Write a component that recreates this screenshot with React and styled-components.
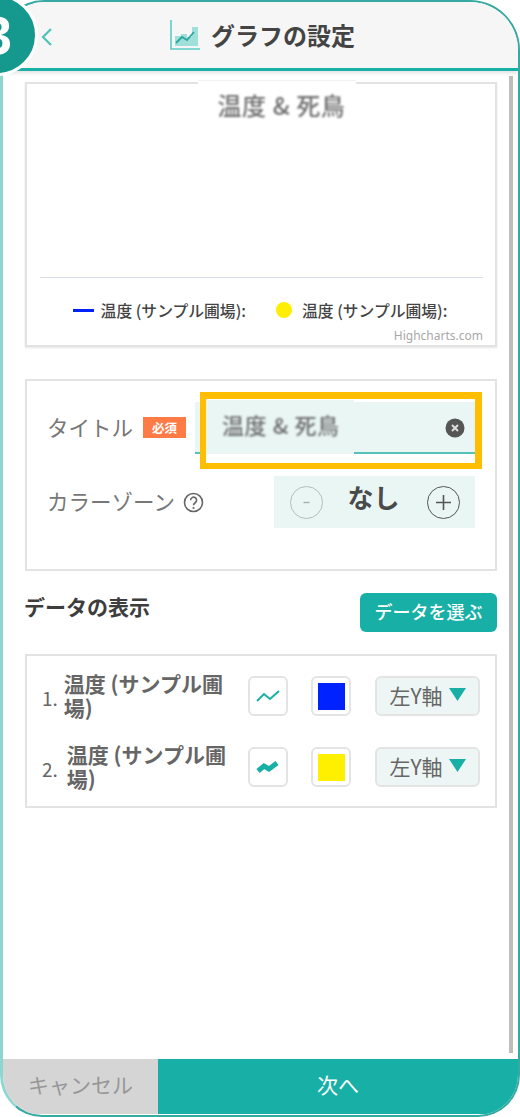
import React from "react";
import styled, { createGlobalStyle } from "styled-components";

const teal = "#18b0a6";
const mint = "#e9f6f4";
const font = `"Noto Sans CJK JP", "Noto Sans", "Liberation Sans", sans-serif`;

const Global = createGlobalStyle`
  html, body { margin: 0; padding: 0; background: #fff; overflow: hidden; }
  body { font-family: ${font}; }
  * { box-sizing: border-box; }
`;

const Page = styled.div`
  position: relative;
  width: 520px;
  height: 1117px;
  overflow: hidden;
`;
const Frame = styled.div`
  width: 520px;
  height: 1117px;
  display: flex;
  flex-direction: column;
  border: 2px solid #36aaa2;
  border-left: 3px solid #8ed6d0;
  border-radius: 44px 50px 42px 42px;
  overflow: hidden;
  background: #fff;
`;
const StepBadge = styled.div`
  position: absolute;
  left: -44px;
  top: -6px;
  width: 82px;
  height: 82px;
  border-radius: 50%;
  background: #15998f;
  border: 3px solid #fff;
  display: flex;
  align-items: center;
  justify-content: center;
  color: #fff;
  font: 800 54px/1 "Liberation Sans", sans-serif;
  z-index: 3;
`;
const Header = styled.header`
  flex: none;
  height: 69px;
  background: #f6f6f6;
  border-bottom: 3px solid ${teal};
  box-shadow: 0 2px 4px rgba(0,0,0,.12);
  display: flex;
  align-items: center;
  justify-content: center;
  position: relative;
  z-index: 1;
  padding-left: 4px;
`;
const Back = styled.svg`
  position: absolute;
  left: 37px;
  top: 25px;
  width: 13px;
  height: 20px;
`;
const HeaderIcon = styled.svg`
  width: 30px;
  height: 32px;
  margin-right: 11px;
`;
const HeaderTitle = styled.h1`
  margin: 0;
  font-size: 24px;
  line-height: 32px;
  font-weight: 700;
  color: #444;
`;
const Main = styled.main`
  flex: 1;
  position: relative;
  padding: 11px 21px 0 22px;
  display: flex;
  flex-direction: column;
`;
const ScrollThumb = styled.div`
  position: absolute;
  top: 5px;
  bottom: 6px;
  right: 5px;
  width: 4px;
  background: #bdbdbd;
`;
const Card = styled.section`
  border: 2px solid #e3e3e3;
  background: #fff;
`;
const ChartCard = styled(Card)`
  position: relative;
  height: 265px;
  padding: 0 12px 0 13px;
  display: flex;
  flex-direction: column;
  box-shadow: 0 1px 2px rgba(0,0,0,.1);
`;
const ChartTitleWrap = styled.div`
  position: absolute;
  left: 171px;
  top: -4px;
  width: 158px;
  height: 44px;
  background: #fff;
  border-top: 1px solid #f2f2f2;
  display: flex;
  align-items: center;
  justify-content: center;
  padding: 4px 0 0 9px;
`;
const Blurred = styled.span`
  font-size: ${(p) => p.$size}px;
  font-weight: 500;
  color: #6f6f6f;
  filter: blur(1.1px);
  white-space: nowrap;
  letter-spacing: 0.6px;
`;
const PlotArea = styled.div`
  height: 194px;
  flex: none;
  border-bottom: 1.5px solid #d9dfe8;
`;
const Legend = styled.div`
  height: 50px;
  flex: none;
  margin-top: 7px;
  display: flex;
  align-items: center;
  justify-content: center;
  gap: 30px;
  padding-right: 3px;
`;
const LegendItem = styled.div`
  display: flex;
  align-items: center;
  gap: 7px;
  font-size: 15.8px;
  font-weight: 500;
  color: #444;
  white-space: nowrap;
`;
const LegendLine = styled.span`
  width: 21px;
  height: 3px;
  background: #0022ff;
`;
const LegendDot = styled.span`
  width: 16px;
  height: 16px;
  border-radius: 50%;
  background: #ffee00;
  margin-right: 3px;
`;
const Credit = styled.div`
  margin-top: -6px;
  text-align: right;
  font: 12px/14px "Noto Sans", sans-serif;
  color: #a8a8a8;
`;
const FormCard = styled(Card)`
  margin-top: 32px;
  height: 192px;
  padding: 21px 20px 0 20px;
  display: flex;
  flex-direction: column;
  gap: 22px;
`;
const FieldRow = styled.div`
  display: flex;
  align-items: center;
`;
const Label = styled.label`
  font-size: 21.5px;
  font-weight: 400;
  color: #777;
  display: flex;
  align-items: center;
  white-space: nowrap;
  margin-top: -4px;
`;
const Required = styled.span`
  width: 43px;
  height: 21px;
  margin-left: 10px;
  margin-top: 2px;
  background: #ff7b46;
  color: #fff;
  font-size: 12.5px;
  font-weight: 700;
  display: flex;
  align-items: center;
  justify-content: center;
`;
const TitleLabelCol = styled.div`
  width: 148px;
  flex: none;
  height: 52px;
  display: flex;
  align-items: center;
`;
const Input = styled.div`
  position: relative;
  flex: 1;
  height: 52px;
  background: ${mint};
  border-bottom: 2px solid #55c3ba;
`;
const InputPatch = styled.div`
  position: absolute;
  left: 11px;
  top: -2px;
  bottom: -2px;
  width: 148px;
  background: ${mint};
  display: flex;
  align-items: center;
  padding: 0 0 6px 16px;
`;
const Clear = styled.svg`
  position: absolute;
  right: 10px;
  top: 16px;
  width: 20px;
  height: 20px;
`;
const Highlight = styled.div`
  position: absolute;
  left: 5px;
  right: -7px;
  top: -10px;
  bottom: -17px;
  border: solid #ffbe00;
  border-width: 7px 7px 6px 6px;
  pointer-events: none;
`;
const Help = styled.svg`
  width: 21px;
  height: 21px;
  margin-left: 8px;
  margin-top: 4px;
`;
const Stepper = styled.div`
  margin-left: auto;
  width: 201px;
  height: 52px;
  background: ${mint};
  display: flex;
  align-items: center;
  justify-content: space-between;
  padding: 0 15px 0 16px;
`;
const StepButton = styled.span`
  width: 33px;
  height: 33px;
  border-radius: 50%;
  border: 1.5px solid ${(p) => (p.$off ? "#b5bdbb" : "#555")};
  display: flex;
  align-items: center;
  justify-content: center;
  margin-top: 1px;
`;
const StepGlyph = styled.svg`
  width: 19px;
  height: 19px;
`;
const StepValue = styled.span`
  font-size: 26px;
  font-weight: 700;
  color: #4a4a4a;
  line-height: 36px;
  margin-top: -10px;
  margin-right: 3px;
`;
const DataHead = styled.div`
  margin-top: 22px;
  display: flex;
  justify-content: space-between;
  align-items: flex-start;
`;
const SectionTitle = styled.h2`
  margin: -1px 0 0 -1px;
  font-size: 21px;
  line-height: 28px;
  font-weight: 700;
  color: #3d3d3d;
`;
const PickButton = styled.button`
  width: 137px;
  height: 39px;
  border: 0;
  border-radius: 6px;
  background: ${teal};
  color: #fff;
  font: 500 18px ${font};
  padding: 0 0 3px;
`;
const DataCard = styled(Card)`
  margin-top: 22px;
  height: 154px;
  padding: 16px 15px 0 16px;
  display: flex;
  flex-direction: column;
  gap: 23px;
`;
const Row = styled.div`
  height: 48px;
  display: flex;
  align-items: center;
`;
const Index = styled.span`
  flex: none;
  font-size: 19px;
  color: #666;
  margin-right: ${(p) => p.$gap}px;
  margin-top: 2px;
  margin-left: -1px;
`;
const SeriesName = styled.div`
  flex: 1;
  min-width: 0;
  font-size: 21px;
  line-height: 24px;
  font-weight: 700;
  color: #666;
  margin-top: -2px;
`;
const Swatch = styled.div`
  flex: none;
  width: 40px;
  height: 40px;
  border: 2px solid #e4e4e4;
  border-radius: 6px;
  background: #fff;
  margin-left: ${(p) => p.$gap || 0}px;
  display: flex;
  align-items: center;
  justify-content: center;
`;
const Color = styled.span`
  width: 27px;
  height: 27px;
  background: ${(p) => p.$color};
`;
const Axis = styled.div`
  flex: none;
  width: 105px;
  height: 40px;
  margin-left: 24px;
  border: 2px solid #e4e4e4;
  border-radius: 6px;
  background: #edf6f4;
  color: #666;
  font-size: 21px;
  display: flex;
  align-items: center;
  justify-content: center;
  gap: 6px;
  padding-bottom: 3px;
`;
const Caret = styled.svg`
  width: 17px;
  height: 13px;
`;
const Footer = styled.footer`
  margin-top: auto;
  flex: none;
  height: 55px;
  margin-bottom: 1px;
  display: flex;
`;
const Cancel = styled.button`
  width: 155px;
  border: 0;
  background: #d5d5d5;
  color: #979797;
  font: 400 21px ${font};
  padding: 0 0 6px;
`;
const Next = styled.button`
  flex: 1;
  border: 0;
  background: ${teal};
  color: #fff;
  font: 400 21px ${font};
  padding: 0 0 6px;
`;

const series = [
  { n: "1.", color: "#0022ff", wave: false, gap: 6 },
  { n: "2.", color: "#fff000", wave: true, gap: 9 },
];

export default function App() {
  return (
    <Page>
      <Global />
      <StepBadge>3</StepBadge>
      <Frame>
        <Header>
          <Back viewBox="0 0 13 20"><path d="M11 2 3 10l8 8" fill="none" stroke="#4cc2b8" strokeWidth="2.2" /></Back>
          <HeaderIcon viewBox="0 0 30 32">
            <path d="M1 1v29h29" fill="none" stroke="#5ccbc2" strokeWidth="1.6" />
            <path d="M5 27V17h6v-2h6v3h5V8h6v19z" fill="#9fe0da" />
            <path d="M6 24l6-6 5 3 7-8" fill="none" stroke="#2aa79d" strokeWidth="1.8" />
          </HeaderIcon>
          <HeaderTitle>グラフの設定</HeaderTitle>
        </Header>
        <Main>
          <ChartCard>
            <ChartTitleWrap><Blurred $size={24}>温度 &amp; 死鳥</Blurred></ChartTitleWrap>
            <PlotArea />
            <Legend>
              <LegendItem><LegendLine />温度 (サンプル圃場):</LegendItem>
              <LegendItem><LegendDot />温度 (サンプル圃場):</LegendItem>
            </Legend>
            <Credit>Highcharts.com</Credit>
          </ChartCard>

          <FormCard>
            <FieldRow>
              <TitleLabelCol>
                <Label>タイトル<Required>必須</Required></Label>
              </TitleLabelCol>
              <Input>
                <InputPatch><Blurred $size={22}>温度 &amp; 死鳥</Blurred></InputPatch>
                <Clear viewBox="0 0 20 20">
                  <circle cx="10" cy="10" r="9.5" fill="#555" />
                  <path d="M7 7l6 6M13 7l-6 6" stroke="#ddd" strokeWidth="2" />
                </Clear>
                <Highlight />
              </Input>
            </FieldRow>
            <FieldRow>
              <Label>
                カラーゾーン
                <Help viewBox="0 0 21 21">
                  <circle cx="10.5" cy="10.5" r="9" fill="none" stroke="#666" strokeWidth="1.6" />
                  <path d="M7.6 8.2a3 3 0 1 1 4.6 2.5c-1.1.7-1.7 1.2-1.7 2.5" fill="none" stroke="#666" strokeWidth="1.6" />
                  <circle cx="10.5" cy="16" r="1.1" fill="#666" />
                </Help>
              </Label>
              <Stepper>
                <StepButton $off>
                  <StepGlyph viewBox="0 0 19 19"><path d="M6.5 9.5h6" stroke="#a8aeac" strokeWidth="1.4" /></StepGlyph>
                </StepButton>
                <StepValue>なし</StepValue>
                <StepButton>
                  <StepGlyph viewBox="0 0 19 19"><path d="M9.5 2v15M2 9.5h15" stroke="#555" strokeWidth="1.6" /></StepGlyph>
                </StepButton>
              </Stepper>
            </FieldRow>
          </FormCard>

          <DataHead>
            <SectionTitle>データの表示</SectionTitle>
            <PickButton>データを選ぶ</PickButton>
          </DataHead>

          <DataCard>
            {series.map((s) => (
              <Row key={s.n}>
                <Index $gap={s.gap}>{s.n}</Index>
                <SeriesName>温度 (サンプル圃場)</SeriesName>
                <Swatch $gap={16}>
                  <svg width="26" height="16" viewBox="0 0 26 16">
                    {s.wave ? (
                      <path d="M3 12l6-5 5 3 8-6" fill="none" stroke={teal} strokeWidth="5" />
                    ) : (
                      <path d="M2 13l7-7 6 5 9-8" fill="none" stroke={teal} strokeWidth="2" />
                    )}
                  </svg>
                </Swatch>
                <Swatch $gap={23}><Color $color={s.color} /></Swatch>
                <Axis>
                  左Y軸
                  <Caret viewBox="0 0 17 13"><path d="M0 0h17L8.5 13z" fill={teal} /></Caret>
                </Axis>
              </Row>
            ))}
          </DataCard>

          <ScrollThumb />
        </Main>
        <Footer>
          <Cancel>キャンセル</Cancel>
          <Next>次へ</Next>
        </Footer>
      </Frame>
    </Page>
  );
}
